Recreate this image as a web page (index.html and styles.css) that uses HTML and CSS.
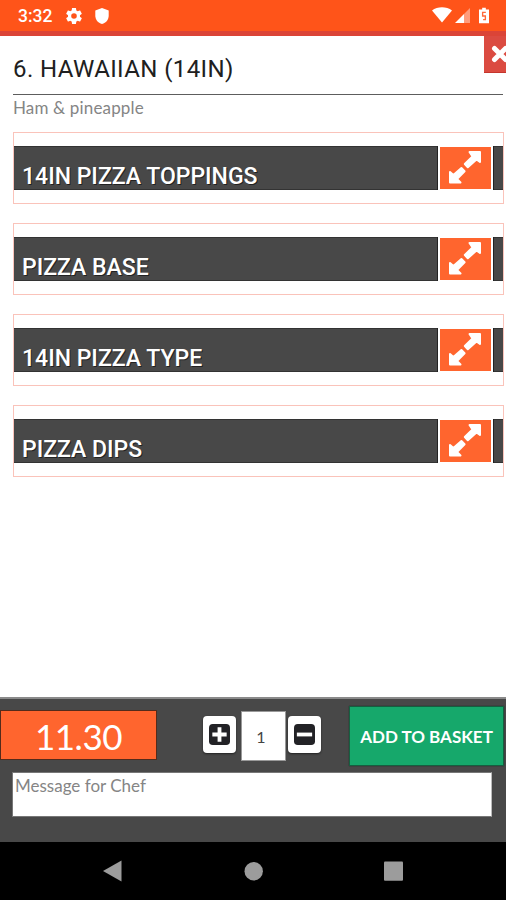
FILE: index.html
```
<!DOCTYPE html>
<html lang="en">
<head>
<meta charset="utf-8">
<title>Hawaiian</title>
<link rel="stylesheet" href="styles.css">
</head>
<body>
<svg class="defs" aria-hidden="true">
  <symbol id="expand" viewBox="0 0 34 34">
    <path d="M21.500 2H32v10l-3.500-2.500-8.700 7.700-3-3.200L24.500 6.500z M2 22l3.400 3 8-7 3.200 3.200-7.600 7.800 3.500 3.500H2z" fill="#fff" stroke="#fff" stroke-width="2" stroke-linejoin="round"/>
  </symbol>
</svg>
<div class="screen">
  <header class="status">
    <span class="time">3:32</span>
    <svg class="gear" viewBox="2 2 20 20"><path fill="#fff" fill-rule="evenodd" d="M19.43 12.980c.04-.32.07-.64.07-.98s-.03-.66-.07-.98l2.110-1.650c.19-.15.24-.42.12-.64l-2-3.460c-.12-.22-.39-.3-.61-.22l-2.490 1c-.52-.4-1.080-.73-1.690-.98l-.38-2.650C14.460 2.180 14.250 2 14 2h-4c-.25 0-.46.18-.49.42l-.38 2.650c-.61.25-1.170.59-1.690.98l-2.490-1c-.23-.09-.49 0-.61.22l-2 3.460c-.13.22-.07.49.12.64l2.110 1.650c-.04.32-.07.65-.07.98s.03.66.07.98l-2.110 1.650c-.19.15-.24.42-.12.64l2 3.460c.12.22.39.3.61.22l2.490-1c.52.4 1.080.73 1.690.98l.38 2.650c.03.24.24.42.49.42h4c.25 0 .46-.18.49-.42l.38-2.650c.61-.25 1.170-.59 1.690-.98l2.490 1c.23.09.49 0 .61-.22l2-3.460c.12-.22.07-.49-.12-.64zM12 15.500a3.500 3.500 0 1 1 0-7 3.500 3.500 0 0 1 0 7z"/></svg>
    <svg class="shield" viewBox="0 0 14 16"><path fill="#fff" d="M7 0l6.700 2.500v5C13.700 12 11 14.800 7 16 3 14.800.3 12 .3 7.500v-5z"/></svg>
    <span class="spacer"></span>
    <svg class="wifi" viewBox="0 0 20 16"><path fill="#fff" d="M0 3.500C5.500-.8 14.500-.8 20 3.500L10 15.500z"/></svg>
    <svg class="signal" viewBox="0 0 15 15"><path fill="#ff9c7c" d="M15 0v15H9V6z"/><path fill="#fff" d="M9 6v9H0z"/></svg>
    <svg class="battery" viewBox="0 0 11 17"><path fill="#fff" d="M3.500 0h4v2H11v15H0V2h3.500z"/><path d="M7.500 5H4v4h3v4H4.500" fill="none" stroke="#ff6a3c" stroke-width="1.500"/></svg>
  </header>
  <main class="content">
    <button class="close" aria-label="Close"><svg viewBox="0 0 18 18"><path d="M3.500 3.500l11 11M14.500 3.500l-11 11" stroke="#fff" stroke-width="5" stroke-linecap="round"/></svg></button>
    <h1>6. HAWAIIAN (14IN)</h1>
    <p class="description">Ham &amp; pineapple</p>
    <section class="panel"><div class="bar"><h2>14IN PIZZA TOPPINGS</h2><button class="toggle" aria-label="Expand"><svg><use href="#expand"/></svg></button></div></section>
    <section class="panel"><div class="bar"><h2>PIZZA BASE</h2><button class="toggle" aria-label="Expand"><svg><use href="#expand"/></svg></button></div></section>
    <section class="panel"><div class="bar"><h2>14IN PIZZA TYPE</h2><button class="toggle" aria-label="Expand"><svg><use href="#expand"/></svg></button></div></section>
    <section class="panel"><div class="bar"><h2>PIZZA DIPS</h2><button class="toggle" aria-label="Expand"><svg><use href="#expand"/></svg></button></div></section>
  </main>
  <footer class="order">
    <div class="controls">
      <div class="price">11.30</div>
      <div class="quantity">
        <button class="step" aria-label="Add one"><svg viewBox="0 0 22 22"><rect width="22" height="22" rx="4" fill="#222226"/><path d="M11 3.500v15M3.500 11h15" stroke="#fff" stroke-width="4"/></svg></button>
        <div class="count">1</div>
        <button class="step" aria-label="Remove one"><svg viewBox="0 0 22 22"><rect width="22" height="22" rx="4" fill="#222226"/><path d="M3 11h16" stroke="#fff" stroke-width="4"/></svg></button>
      </div>
      <button class="add">ADD TO BASKET</button>
    </div>
    <div class="message">Message for Chef</div>
  </footer>
  <nav class="system">
    <svg viewBox="0 0 506 58"><path d="M103 29l18.500-10.500v21z" fill="#9c9c9c"/><circle cx="253.700" cy="29.300" r="9.200" fill="#9c9c9c"/><rect x="384" y="19.500" width="19" height="19.300" rx="1" fill="#9c9c9c"/></svg>
  </nav>
</div>
</body>
</html>
```
FILE: styles.css
```
* { box-sizing: border-box; }
body { margin: 0; background: #fff; }
button { border: 0; padding: 0; font: inherit; }
svg { display: block; }
h1, h2, p { margin: 0; }
.defs { display: none; }
.screen { width: 506px; height: 900px; display: flex; flex-direction: column; overflow: hidden; font-family: Lato, sans-serif; }

.status { height: 36px; flex: none; display: flex; padding: 0 16px 0 18px; background: #ff5419; border-bottom: 5px solid #db4437; align-items: flex-start; }
.time { width: 48px; font: 500 17.500px/32px Roboto, sans-serif; color: #fff; }
.gear { width: 16px; height: 16px; margin-top: 8px; }
.shield { width: 14px; height: 16px; margin: 8px 0 0 13px; }
.spacer { flex: 1; }
.wifi { width: 20px; height: 16px; margin: 7px 3px 0 0; }
.signal { width: 15px; height: 15px; margin: 8px 9px 0 0; }
.battery { width: 10px; height: 17px; margin-top: 7px; margin-right: 1px; }

.content { position: relative; flex: 1; padding: 0 2px 0 13px; }
.close { position: absolute; right: 0; top: 0; width: 22px; height: 37px; background: #db4b41; border-bottom: 1px solid #c5352d; overflow: hidden; }
.close svg { width: 18px; height: 18px; margin: -1px 0 0 7px; }
h1 { width: 490px; height: 59px; padding-top: 18px; border-bottom: 1px solid #5d5d5d; font: 400 24px/30px Roboto, sans-serif; letter-spacing: .4px; color: #202020; white-space: nowrap; }
.description { height: 37px; padding-top: 3px; font-size: 17px; line-height: 20px; letter-spacing: .15px; color: #858585; }
.panel { width: 491px; height: 72px; margin-bottom: 19px; padding: 13px 0; border: 1px solid #fac3ba; }
.bar { height: 44px; display: flex; justify-content: space-between; padding-right: 10px; background: #484848; border-top: 1px solid #333; border-bottom: 1px solid #333; }
h2 { padding: 15px 0 0 8px; font: 500 23px/30px Roboto, sans-serif; color: #fff; text-shadow: 1px 1px #222; white-space: nowrap; }
.toggle { width: 55px; height: 44px; margin-top: -1px; background: #ff652e; border: solid #fff; border-width: 1px 2px; box-shadow: -1px 0 #222, 1px 0 #222; }
.toggle svg { width: 34px; height: 34px; margin: -3px 0 0 8px; }

.order { height: 145px; flex: none; background: #484848; border-top: 2px solid #8a8a8a; }
.controls { display: flex; height: 73px; padding: 7px 2px 0 0; }
.price { width: 157px; height: 50px; margin-top: 4px; border: 1px solid #542b1b; background: #ff652e; color: #fff; font-size: 35px; letter-spacing: -.5px; line-height: 50px; text-align: center; }
.quantity { display: flex; padding-top: 5px; margin-left: 46px; }
.step { width: 33px; height: 37px; margin-top: 5px; border-radius: 4px; background: #fff; box-shadow: 0 1px 2px #222; }
.step svg { width: 21px; height: 21px; margin: 0 auto; }
.count { width: 45px; height: 50px; margin: 0 2px 0 5px; border: 1px solid #999; background: #fff; color: #444; font-size: 16px; line-height: 49px; text-align: center; padding-right: 5px; }
.add { width: 155px; height: 60px; margin-left: auto; border: 1px solid #155f40; background: #16a86b; color: #fff; font-size: 17px; font-weight: 700; box-shadow: 0 0 1px #222; white-space: nowrap; }
.message { width: 480px; height: 45px; margin-left: 12px; padding: 3px 2px; border: 1px solid #777; border-right-color: #bbb; background: #fff; color: #858585; font-size: 17px; line-height: 20px; }
.system { height: 58px; flex: none; background: #000; }
.system svg { width: 506px; height: 58px; }
```
